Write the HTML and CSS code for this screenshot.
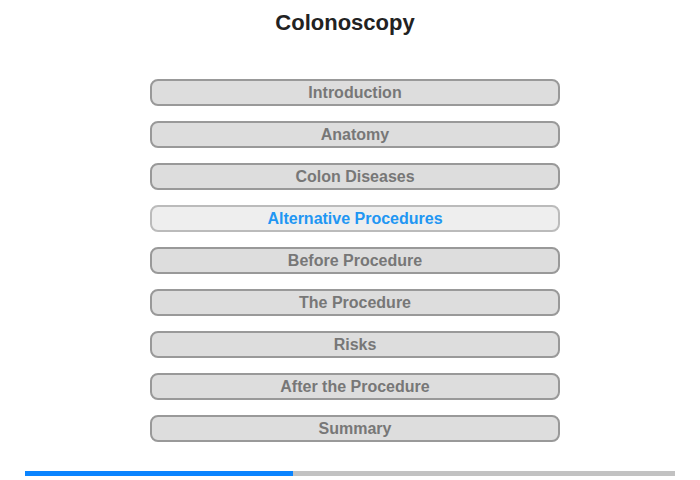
FILE: index.html
```html
<!DOCTYPE html>
<html>
  <head>
    <meta charset="utf-8">
    <title>Colonoscopy</title>
    <link rel="stylesheet" href="styles.css">
  </head>
  <body>
    <div id="page">
      <h1 class="title">Colonoscopy</h1>
      <div class="menu">
        <a class="item" href="#">Introduction</a>
        <a class="item" href="#">Anatomy</a>
        <a class="item" href="#">Colon Diseases</a>
        <a class="item current" href="#">Alternative Procedures</a>
        <a class="item" href="#">Before Procedure</a>
        <a class="item" href="#">The Procedure</a>
        <a class="item" href="#">Risks</a>
        <a class="item" href="#">After the Procedure</a>
        <a class="item" href="#">Summary</a>
      </div>
      <div class="progress"><div class="done" style="width: 268px"></div></div>
    </div>
  </body>
</html>
```
FILE: styles.css
```css
body {
    margin: 0;
    font-family: 'Liberation Sans', Arial, sans-serif;
    background: #fff;
}
#page {
    width: 700px; height: 480px;
    display: flex; flex-direction: column;
}
.title {
    margin: 10px 0 0 0; padding-right: 10px;
    font-size: 22px; line-height: 25px;
    text-align: center; color: #222;
}
.menu {
    margin: 44px 0 0 150px; width: 410px;
    display: flex; flex-direction: column; gap: 15px;
}
.item {
    display: block; height: 23px; line-height: 23px;
    border: 2px solid #999; border-radius: 8px;
    background: #ddd; color: #777;
    font-size: 16px; font-weight: bold;
    text-align: center; text-decoration: none;
}
.item.current {
    background: #eee; border-color: #bbb; color: #2196f3;
}
.progress {
    margin: 29px 0 0 25px; width: 650px; height: 5px;
    background: #c2c2c2;
}
.done { height: 100%; background: #0a84ff; }
```
